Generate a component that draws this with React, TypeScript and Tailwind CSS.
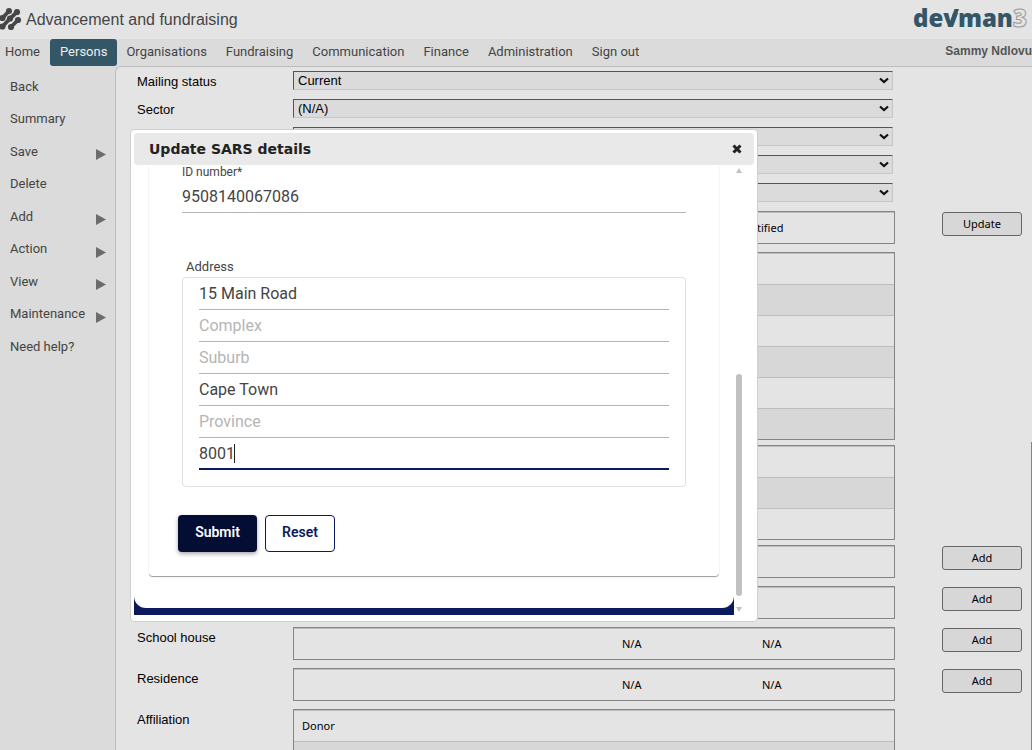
import React from 'react';

const NAV = ['Home', 'Persons', 'Organisations', 'Fundraising', 'Communication', 'Finance', 'Administration', 'Sign out'];

const MENU = [
  { label: 'Back', sub: false },
  { label: 'Summary', sub: false },
  { label: 'Save', sub: true },
  { label: 'Delete', sub: false },
  { label: 'Add', sub: true },
  { label: 'Action', sub: true },
  { label: 'View', sub: true },
  { label: 'Maintenance', sub: true },
  { label: 'Need help?', sub: false },
];

const SELECTS = [
  { id: 'mailing', label: 'Mailing status', value: 'Current' },
  { id: 'sector', label: 'Sector', value: '(N/A)' },
  { id: 'select-3', label: '', value: '' },
  { id: 'select-4', label: '', value: '' },
  { id: 'select-5', label: '', value: '' },
];

function Mark() {
  return (
    <svg className="h-[24px] w-[22px] shrink-0" viewBox="0 0 22 24" aria-hidden="true">
      <g stroke="#464646" strokeWidth="3.8" strokeLinecap="round" fill="none">
        <path d="M2.5 10 L9 3" />
        <path d="M2.5 18.5 L10 10.5 L17 4" />
        <path d="M11 19 L18 12" />
      </g>
      <g fill="#464646">
        <circle cx="9" cy="3" r="3" />
        <circle cx="17" cy="4" r="3.100" />
        <circle cx="2.500" cy="10" r="3.100" />
        <circle cx="10" cy="10.500" r="3.100" />
        <circle cx="18" cy="12" r="3.100" />
        <circle cx="2.500" cy="18.500" r="3.100" />
        <circle cx="11" cy="19" r="3.100" />
      </g>
    </svg>
  );
}

function Brand() {
  return (
    <div className="mr-[5px] flex pb-[4px] font-['Open_Sans','Noto_Sans',sans-serif] text-[24px] leading-[35px] font-extrabold text-[#335766]">
      <span>de</span>
      <span className="relative">
        v
        <svg className="absolute top-[9px] left-0 h-[18px] w-[16px]" viewBox="0 0 16 18" aria-hidden="true">
          <path d="M5 18 H9.500 L16 0 H11.500 Z" fill="#335766" />
        </svg>
      </span>
      <span>man</span>
      <span className="text-transparent [-webkit-text-stroke:1px_#999]">3</span>
    </div>
  );
}

function SelectRow({ id, label, value }: { id: string; label: string; value: string }) {
  return (
    <div className="flex h-[28px] items-start">
      <label htmlFor={id} className="w-[156px] shrink-0 leading-[21px]">{label}</label>
      <div className="relative mr-[2px] flex-1">
        <select
          id={id}
          defaultValue={value}
          className="block h-[19px] w-full appearance-none border border-t-[#555] border-r-[#c6c6c6] border-b-[#c6c6c6] border-l-[#555] bg-[#dbdbdb] pl-[4px] leading-[17px] outline-none"
        >
          <option value={value}>{value}</option>
        </select>
        <svg className="pointer-events-none absolute top-[6px] right-[4px] h-[7px] w-[10px]" viewBox="0 0 10 7" aria-hidden="true">
          <path d="M1 1.500 L5 5 L9 1.500" fill="none" stroke="#111" strokeWidth="2.200" />
        </svg>
      </div>
      <div className="w-[137px] shrink-0" />
    </div>
  );
}

type Cells = [string, string, string];

type TableRowProps = { label?: string; rows: Cells[]; action?: string; gap: 'wide' | 'tight'; narrow?: boolean };

function TableRow({ label = '', rows, action, gap, narrow = false }: TableRowProps) {
  return (
    <div className={gap === 'wide' ? 'mb-[8px] flex items-start' : 'mb-[5px] flex items-start'}>
      <div className="w-[156px] shrink-0 leading-[21px]">{label}</div>
      <div className="flex-1 border border-[#858585]">
        <table className="w-full table-fixed border-separate border-spacing-0 font-['Noto_Sans',sans-serif] text-[11px]">
          <colgroup>
            <col className="w-[320px]" />
            <col className={narrow ? 'w-[120px]' : 'w-[140px]'} />
            <col />
          </colgroup>
          <tbody>
            {rows.map((cells, i) => (
              <tr key={i} className="even:bg-[#d7d7d7]">
                {cells.map((c, j) => (
                  <td key={j} className="h-[31px] border-t border-[#bdbdbd] p-0 pl-[8px] leading-[16px] whitespace-nowrap">{c}</td>
                ))}
              </tr>
            ))}
          </tbody>
        </table>
      </div>
      <div className="w-[137px] shrink-0 pt-px pl-[47px]">
        {action && (
          <button type="button" className="block h-[24px] w-[80px] rounded-[3px] border border-[#666] bg-[#d7d7d7] font-['Noto_Sans',sans-serif] text-[11px] leading-[16px]">
            {action}
          </button>
        )}
      </div>
    </div>
  );
}

const blank = (n: number): Cells[] => Array.from({ length: n }, () => ['', '', ''] as Cells);

const ADDRESS = [
  { name: 'Street', value: '15 Main Road' },
  { name: 'Complex', value: '' },
  { name: 'Suburb', value: '' },
  { name: 'City', value: 'Cape Town' },
  { name: 'Province', value: '' },
];

const FIELD = 'block h-[32px] w-full border-b border-[#b5b5b5] bg-transparent text-[16px] text-[#444] outline-none placeholder:text-[#b5b5b5]';

function Dialog() {
  return (
    <section role="dialog" aria-labelledby="dialog-title" className="absolute top-[129px] left-[130px] w-[628px] rounded-[4px] border border-[#cfcfcf] bg-white p-[3px] pb-[6px]">
      <header className="flex h-[32px] items-center justify-between rounded-[4px] bg-[#e9e9e9] pr-[11px] pl-[15px]">
        <h2 id="dialog-title" className="font-['DejaVu_Sans',sans-serif] text-[14px] font-bold text-[#222]">Update SARS details</h2>
        <button type="button" aria-label="Close" className="flex h-[20px] w-[12px] items-center justify-center">
          <svg className="h-[10px] w-[10px]" viewBox="0 0 10 10" aria-hidden="true">
            <path d="M1.500 1.500 L8.500 8.500 M8.500 1.500 L1.500 8.500" stroke="#222" strokeWidth="3" />
          </svg>
        </button>
      </header>
      <div className="flex h-[450px] font-['Roboto',sans-serif]">
        <div className="flex-1 bg-[#0a1a5c] pb-[7px]">
          <form className="h-full rounded-b-[12px] bg-white px-[15px]" onSubmit={(e) => e.preventDefault()}>
            <div className="h-[411px] rounded-b-[4px] px-[33px] shadow-[0_1px_1px_rgba(0,0,0,0.4)] [clip-path:inset(0_-4px_-4px_-4px)]">
              <label htmlFor="id-number" className="block h-[16px] text-[12px] leading-[14px] text-[#444]">ID number*</label>
              <input id="id-number" defaultValue="9508140067086" className={FIELD} />
              <fieldset className="mt-[46px]">
                <legend className="mb-[2px] block pl-[4px] text-[13px] leading-[16px] text-[#444]">Address</legend>
                <div className="h-[210px] rounded-[4px] border border-[#e0e0e0] px-[16px]">
                  {ADDRESS.map((f) => (
                    <input key={f.name} aria-label={f.name} placeholder={f.name} defaultValue={f.value} className={FIELD} />
                  ))}
                  <div className="relative">
                    <input aria-label="Postal code" defaultValue="8001" className="block h-[32px] w-full border-b-2 border-[#0a1a5c] bg-transparent text-[16px] text-[#444] caret-transparent outline-none" />
                    <span className="absolute top-[6px] left-[35px] h-[19px] w-px bg-[#222]" />
                  </div>
                </div>
              </fieldset>
              <div className="-ml-[4px] flex gap-[8px] pt-[28px] text-[14px] font-semibold">
                <button type="submit" className="h-[37px] w-[79px] rounded-[4px] bg-[#040d33] pb-[2px] text-white shadow-[0_2px_4px_rgba(0,0,0,0.35)]">Submit</button>
                <button type="reset" className="h-[37px] w-[70px] rounded-[4px] border border-[#0a1a5c] pb-[2px] text-[#0a1a5c]">Reset</button>
              </div>
            </div>
          </form>
        </div>
        <div className="flex w-[20px] flex-col items-start pl-[2px]" aria-hidden="true">
          <svg className="mt-[3px] h-[5px] w-[6px]" viewBox="0 0 6 5"><path d="M3 0 L6 5 H0 Z" fill="#c1c1c1" /></svg>
          <div className="mt-[201px] h-[222px] w-[6px] rounded-[3px] bg-[#c1c1c1]" />
          <svg className="mt-[11px] h-[5px] w-[6px]" viewBox="0 0 6 5"><path d="M0 0 H6 L3 5 Z" fill="#c1c1c1" /></svg>
        </div>
      </div>
    </section>
  );
}

export default function App() {
  return (
    <div className="relative flex h-screen flex-col overflow-hidden bg-[#dbdbdb] font-['Liberation_Sans',Arial,sans-serif] text-[13px] text-black">
      <header className="flex h-[39px] shrink-0 items-center justify-between bg-[#e4e4e4]">
        <div className="flex items-center">
          <Mark />
          <h1 className="pl-[4px] text-[16px] text-[#444]">Advancement and fundraising</h1>
        </div>
        <Brand />
      </header>
      <nav className="flex h-[27px] shrink-0 items-stretch justify-between text-[#444]">
        <div className="flex font-['Roboto',sans-serif]">
          {NAV.map((item) => (
            <a
              key={item}
              href="#"
              className={
                item === 'Persons'
                  ? 'flex items-center rounded-[3px] bg-[#335766] px-[10px] pb-[2px] text-[#eee]'
                  : 'flex items-center pr-[10px] pb-[2px] pl-[9px] first:pl-[5px]'
              }
            >
              {item}
            </a>
          ))}
        </div>
        <div className="text-[12px] leading-[24px] font-bold text-[#555]">Sammy Ndlovu</div>
      </nav>
      <div className="flex min-h-0 flex-1">
        <aside className="w-[115px] shrink-0 pt-[4px] font-['Roboto',sans-serif] text-[#444]">
          <ul className="grid h-[293px] auto-rows-fr">
            {MENU.map((m) => (
              <li key={m.label} className="flex items-center justify-between pr-[9px] pl-[10px]">
                <a href="#">{m.label}</a>
                {m.sub && (
                  <svg className="mt-[6px] h-[11px] w-[10px]" viewBox="0 0 10 11" aria-hidden="true">
                    <path d="M0 0 L10 5.500 L0 11 Z" fill="#6c6c70" />
                  </svg>
                )}
              </li>
            ))}
          </ul>
        </aside>
        <main className="min-w-0 flex-1 overflow-hidden rounded-tl-[6px] border-t border-l border-[#bdbdbd] bg-[#e4e4e4] pt-[4px] pl-[21px]">
          {SELECTS.map((s) => (
            <SelectRow key={s.id} {...s} />
          ))}
          <TableRow gap="wide" narrow rows={[['', '', 'Notified']]} action="Update" />
          <TableRow gap="tight" rows={blank(6)} />
          <TableRow gap="tight" rows={blank(3)} />
          <TableRow gap="wide" rows={blank(1)} action="Add" />
          <TableRow gap="wide" rows={blank(1)} action="Add" />
          <TableRow gap="wide" label="School house" rows={[['', 'N/A', 'N/A']]} action="Add" />
          <TableRow gap="wide" label="Residence" rows={[['', 'N/A', 'N/A']]} action="Add" />
          <TableRow gap="wide" label="Affiliation" rows={[['Donor', '', ''], ['', '', '']]} />
        </main>
      </div>
      <div className="absolute top-[442px] right-0 bottom-0 w-px bg-[#858585]" aria-hidden="true" />
      <Dialog />
    </div>
  );
}
